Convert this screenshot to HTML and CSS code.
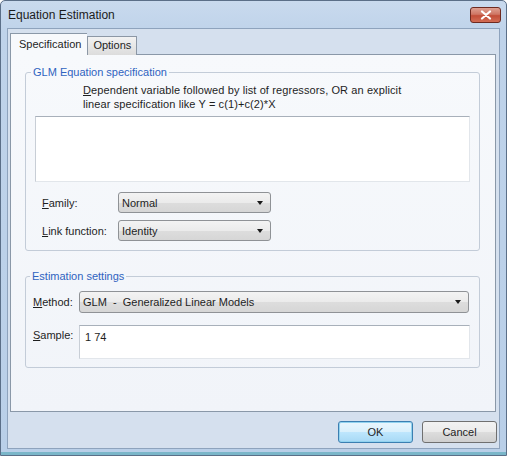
FILE: index.html
```html
<!DOCTYPE html>
<html>
<head>
<meta charset="utf-8">
<link rel="stylesheet" href="styles.css">
</head>
<body>
<div class="win">
  <div class="titlebar">
    <span class="title">Equation Estimation</span>
    <div class="close">
      <svg width="12" height="10" viewBox="0 0 12 10"><path d="M2 1.5 L10 8.5 M10 1.5 L2 8.5" stroke="#fff" stroke-width="2.2" stroke-linecap="round"/></svg>
    </div>
  </div>
  <div class="client">
    <div class="tabs">
      <div class="tab active">Specification</div>
      <div class="tab">Options</div>
    </div>
    <div class="panel">
      <fieldset class="group g1">
        <legend>GLM Equation specification</legend>
        <div class="desc"><u>D</u>ependent variable followed by list of regressors, OR an explicit<br>linear specification like Y = c(1)+c(2)*X</div>
        <div class="textbox eq"></div>
        <div class="row r-family">
          <span class="lbl lbl1"><u>F</u>amily:</span>
          <div class="select s1"><span>Normal</span><i class="arrow"></i></div>
        </div>
        <div class="row r-link">
          <span class="lbl lbl1"><u>L</u>ink function:</span>
          <div class="select s1"><span>Identity</span><i class="arrow"></i></div>
        </div>
      </fieldset>
      <fieldset class="group g2">
        <legend>Estimation settings</legend>
        <div class="row r-method">
          <span class="lbl lbl2"><u>M</u>ethod:</span>
          <div class="select s2"><span>GLM&nbsp; -&nbsp; Generalized Linear Models</span><i class="arrow"></i></div>
        </div>
        <div class="row r-sample">
          <span class="lbl lbl2"><u>S</u>ample:</span>
          <div class="textbox sample">1 74</div>
        </div>
      </fieldset>
    </div>
    <div class="buttons">
      <div class="btn default">OK</div>
      <div class="btn">Cancel</div>
    </div>
  </div>
</div>
</body>
</html>
```
FILE: styles.css
```css
* { box-sizing: border-box; }
html, body { margin: 0; padding: 0; }
body {
  width: 507px;
  height: 456px;
  overflow: hidden;
  font-family: "Liberation Sans", Arial, sans-serif;
  font-size: 11px;
  color: #1e1e1e;
}
u { text-decoration: underline; text-underline-offset: 1px; }

.win {
  width: 507px;
  height: 456px;
  border: 1px solid #5b6f88;
  border-radius: 5px 5px 0 0;
  background: linear-gradient(to bottom, #c9daee 0px, #bfd3ea 30px, #b9cfe8 100%);
  display: flex;
  flex-direction: column;
  box-shadow: inset 0 -3px 0 #7ab6c9;
}

.titlebar {
  height: 27px;
  flex: none;
  display: flex;
  align-items: flex-start;
  justify-content: space-between;
  padding: 0 5px 0 7px;
}
.title {
  font-family: "Liberation Sans", Arial, sans-serif;
  font-size: 12px;
  line-height: 14px;
  margin-top: 7px;
  color: #1b1b1b;
}
.close {
  margin-top: 6px;
  width: 31px;
  height: 16px;
  border: 1px solid #6e2a20;
  border-radius: 3px;
  background: linear-gradient(to bottom, #dfa092 0%, #cf7664 45%, #c24d38 55%, #d26d55 100%);
  display: flex;
  align-items: center;
  justify-content: center;
}

.client {
  flex: 1;
  margin: 0 6px 6px 6px;
  border: 1px solid #8ea3bd;
  background: #d5e0ee;
  display: flex;
  flex-direction: column;
  padding: 4px 2px 4px 2px;
}

.tabs {
  display: flex;
  align-items: flex-end;
  height: 22px;
  position: relative;
  z-index: 2;
  margin-bottom: -1px;
}
.tab {
  height: 19px;
  padding: 0 5px;
  line-height: 17px;
  border: 1px solid #8c97a5;
  border-bottom: none;
  background: linear-gradient(to bottom, #f2f2f2, #dcdcdc);
  font-size: 11px;
}
.tab.active {
  height: 23px;
  margin-bottom: -1px;
  padding: 0 6px 0 8px;
  line-height: 21px;
  background: #f7f9fc;
  border-color: #8a98a8;
  border-right: none;
}

.panel {
  height: 358px;
  margin-right: 1px;
  border: 1px solid #8a98a8;
  background: linear-gradient(to bottom, #f7f9fc, #f1f4f9);
  padding: 10px 15px 0 14px;
  display: flex;
  flex-direction: column;
}

.group {
  margin: 0;
  padding: 0;
  border: 1px solid #c3ccd8;
  border-radius: 3px;
  min-width: 0;
}
.group legend {
  padding: 0 2px;
  color: #2f63c0;
  font-size: 11px;
  line-height: 14px;
}
.g1 { padding: 4px 9px 9px 9px; }
.g1 legend { margin-left: -4px; }
.g2 { margin-top: 18px; padding: 8px 9px 8px 7px; }
.g2 legend { margin-left: -3px; }

.desc {
  margin-left: 48px;
  line-height: 14px;
  letter-spacing: 0.1px;
}
.textbox {
  background: #fff;
  border: 1px solid #e2e6eb;
  border-top-color: #a8b0ba;
  border-left-color: #c8ced6;
}
.eq {
  margin-top: 5px;
  height: 66px;
}

.row { display: flex; align-items: center; }
.r-family { margin-top: 10px; }
.r-link { margin-top: 7px; }
.lbl1 { width: 83px; padding-left: 7px; }
.lbl2 { width: 46px; }
.r-sample { margin-top: 12px; align-items: flex-start; }
.r-sample .lbl2 { margin-top: 4px; }

.select {
  height: 21px;
  border: 1px solid #8f9296;
  border-radius: 3px;
  background: linear-gradient(to bottom, #f3f3f3 0%, #ebebeb 50%, #dddddd 51%, #d6d6d6 100%);
  display: flex;
  align-items: center;
  justify-content: space-between;
  padding: 0 7px 0 3px;
}
.s1 { width: 153px; }
.s2 { flex: 1; height: 22px; margin-right: 1px; }
.arrow {
  width: 0; height: 0;
  border-left: 3.5px solid transparent;
  border-right: 3.5px solid transparent;
  border-top: 4px solid #1a1a1a;
}
.sample {
  flex: 1;
  height: 34px;
  padding: 5px 0 0 5px;
}

.buttons {
  display: flex;
  justify-content: flex-end;
  gap: 9px;
  margin-top: 9px;
  padding-right: 0;
}
.btn {
  width: 75px;
  height: 22px;
  border: 1px solid #707070;
  border-radius: 3px;
  background: linear-gradient(to bottom, #f2f2f2 0%, #ebebeb 50%, #dddddd 51%, #cfcfcf 100%);
  display: flex;
  align-items: center;
  justify-content: center;
  font-size: 11px;
}
.btn.default {
  border-color: #3c7fb1;
  box-shadow: inset 0 0 0 1px #92d3ef;
  background: linear-gradient(to bottom, #eaf6fd 0%, #d9f0fc 50%, #bee6fd 51%, #a7d9f5 100%);
}
```
